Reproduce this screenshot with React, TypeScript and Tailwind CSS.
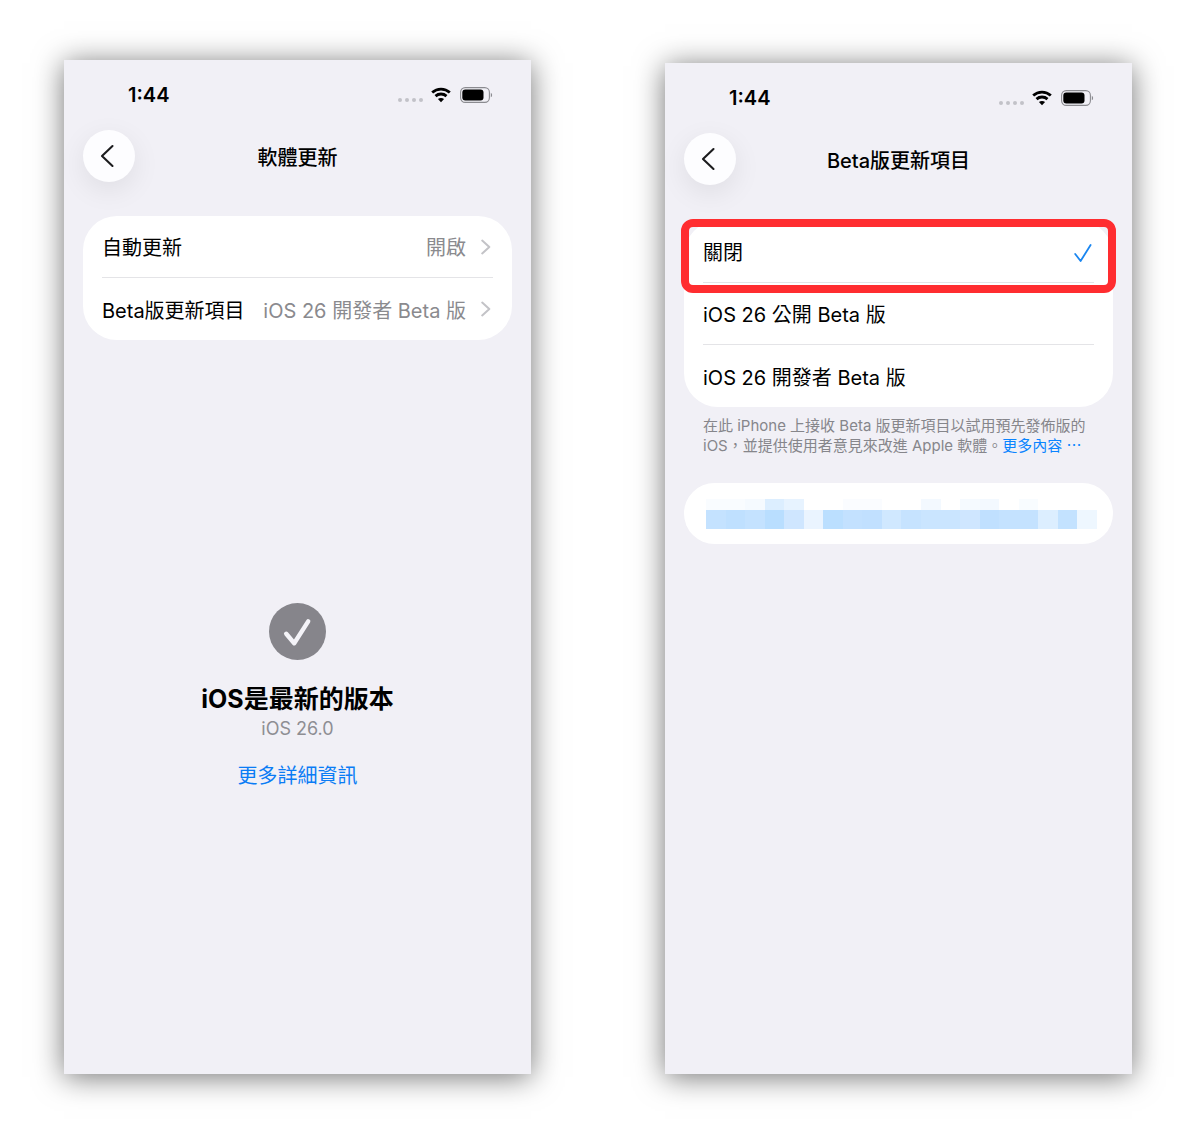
import React from 'react';

interface PhoneProps {
  title: string;
  className?: string;
  children: React.ReactNode;
}

// Placeholder blocks for the hidden account row
const MOSAIC_TOP = [
  'bg-[#f9fcff]', 'bg-[#f9fcff]', 'bg-[#f5faff]', 'bg-[#dceeff]', 'bg-[#e7f3ff]',
  'bg-white', 'bg-white', 'bg-[#fafcff]', 'bg-[#fafcff]', 'bg-white',
  'bg-white', 'bg-[#f3f9ff]', 'bg-white', 'bg-[#f5faff]', 'bg-[#f3f9ff]',
  'bg-white', 'bg-[#f8fcff]', 'bg-white', 'bg-white', 'bg-white',
];

const MOSAIC_BOTTOM = [
  'bg-[#c4e2ff]', 'bg-[#bfe0ff]', 'bg-[#c4e2ff]', 'bg-[#b9deff]', 'bg-[#cfe6ff]',
  'bg-[#eaf4ff]', 'bg-[#bbdfff]', 'bg-[#c3e1ff]', 'bg-[#c1e0ff]', 'bg-[#d0e8ff]',
  'bg-[#c6e3ff]', 'bg-[#cae5ff]', 'bg-[#cae5ff]', 'bg-[#cfe6ff]', 'bg-[#c0e0ff]',
  'bg-[#c4e2ff]', 'bg-[#c4e2ff]', 'bg-[#dceeff]', 'bg-[#c3e2ff]', 'bg-[#eef7ff]',
];

const WifiIcon = () => (
  <svg width="20" height="16" viewBox="0 0 20 16" aria-hidden="true">
    <g fill="none" stroke="#000" strokeWidth="2.8">
      <path d="M1.2 5.5C6.2 .9 13.8 .9 18.8 5.5" />
      <path d="M4.5 9.1C7.6 6.3 12.4 6.3 15.5 9.1" />
    </g>
    <path d="M10 15.2L6.9 12.1C8.6 10.5 11.4 10.5 13.1 12.1Z" fill="#000" />
  </svg>
);

const BatteryIcon = () => (
  <svg width="33" height="16" viewBox="0 0 33 16" aria-hidden="true">
    <rect x=".6" y=".6" width="28.8" height="14.8" rx="4.6" fill="none" stroke="#8b8b90" strokeWidth="1.1" />
    <rect x="2.3" y="2.4" width="21.2" height="11.2" rx="3" fill="#000" />
    <path d="M30.8 5.7C32.6 6.5 32.6 9.5 30.8 10.3Z" fill="#8b8b90" />
  </svg>
);

const ChevronIcon = () => (
  <svg width="10" height="16" viewBox="0 0 10 16" aria-hidden="true">
    <path d="M1.2 1.6L8.3 8L1.2 14.4" fill="none" stroke="#c3c3c7" strokeWidth="2" strokeLinecap="round" strokeLinejoin="round" />
  </svg>
);

const Phone: React.FC<PhoneProps> = ({ title, className, children }) => (
  <section className={`flex min-w-0 flex-1 flex-col bg-[#f1f0f6] px-[19px] shadow-[0_3px_28px_rgba(0,0,0,0.55)] ${className ?? ''}`}>
    {/* Status bar */}
    <div className="flex h-[70px] items-center justify-between pr-[19px] pl-[45px]">
      <span className="text-xl font-semibold">1:44</span>
      <div className="flex items-center">
        <div className="mt-[10px] mr-2 flex gap-[3px]">
          {[0, 1, 2, 3].map((i) => (
            <span key={i} className="size-1 rounded-full bg-[#c2c2c8]" />
          ))}
        </div>
        <WifiIcon />
        <span className="ml-[9px] flex">
          <BatteryIcon />
        </span>
      </div>
    </div>

    {/* Navigation bar */}
    <header className="grid grid-cols-[52px_1fr_52px] items-center">
      <button
        type="button"
        aria-label="返回"
        className="flex size-[52px] items-center justify-center rounded-full bg-[#fdfdff] shadow-[0_8px_28px_rgba(0,0,0,0.08)]"
      >
        <svg width="16" height="24" viewBox="0 0 16 24" className="mr-1" aria-hidden="true">
          <path d="M13.5 2L3 12L13.5 22" fill="none" stroke="#1c1c1e" strokeWidth="2.1" strokeLinecap="round" strokeLinejoin="round" />
        </svg>
      </button>
      <h1 className="pt-[3px] text-center text-xl font-medium">{title}</h1>
    </header>

    {children}
  </section>
);

const SettingRow = ({ label, value }: { label: string; value: string }) => (
  <button type="button" className="flex h-[62px] w-full items-center text-left">
    <span className="pt-[3px]">{label}</span>
    <span className="mr-[15px] ml-auto pt-[3px] text-[#8a8a8e]">{value}</span>
    <span className="mr-[2px]">
      <ChevronIcon />
    </span>
  </button>
);

const OptionRow = ({ label, selected }: { label: string; selected?: boolean }) => (
  <button type="button" aria-pressed={!!selected} className="flex h-[62px] w-full items-center justify-between pt-[3px] text-left">
    <span>{label}</span>
    {selected && (
      <svg width="20" height="20" viewBox="0 0 20 20" className="mr-px" aria-hidden="true">
        <path d="M2.2 11L7.6 18L17.6 2" fill="none" stroke="#1a86f0" strokeWidth="1.8" strokeLinecap="round" strokeLinejoin="round" />
      </svg>
    )}
  </button>
);

const SoftwareUpdate = () => (
  <Phone title="軟體更新">
    <div className="mt-[34px] divide-y divide-[#e4e4e7] rounded-[34px] bg-white px-[19px]">
      <SettingRow label="自動更新" value="開啟" />
      <SettingRow label="Beta版更新項目" value="iOS 26 開發者 Beta 版" />
    </div>

    <div className="flex flex-1 flex-col items-center justify-center pb-[22px]">
      <svg width="57" height="57" viewBox="0 0 57 57" aria-hidden="true">
        <circle cx="28.5" cy="28.5" r="28.5" fill="#86858b" />
        <path d="M17.2 30.8L25.2 40.2L39.2 18.4" fill="none" stroke="#f4f3f8" strokeWidth="4.4" strokeLinecap="round" strokeLinejoin="round" />
      </svg>
      <h2 className="mt-6 text-[25px] leading-[30px] font-bold">iOS是最新的版本</h2>
      <p className="mt-[3px] text-lg leading-6 text-[#8e8e93]">iOS 26.0</p>
      <a href="#details" className="mt-[21px] leading-7 text-[#0a7cf5]">更多詳細資訊</a>
    </div>
  </Phone>
);

const BetaUpdates = () => (
  <Phone title="Beta版更新項目" className="mt-[3px]">
    <div className="relative mt-9 rounded-[34px] bg-white px-[19px]">
      <div className="divide-y divide-[#e4e4e7]">
        <OptionRow label="關閉" selected />
        <OptionRow label="iOS 26 公開 Beta 版" />
        <OptionRow label="iOS 26 開發者 Beta 版" />
      </div>
      {/* Highlight around the first option */}
      <div className="pointer-events-none absolute -inset-x-[3px] -top-[2px] h-[74px] rounded-xl border-8 border-[#ff2d30]" />
    </div>

    <p className="mt-[9px] px-[19px] text-[15px] leading-5 text-[#86868b]">
      在此 iPhone 上接收 Beta 版更新項目以試用預先發佈版的
      <br />
      iOS，並提供使用者意見來改進 Apple 軟體。
      <a href="#more" className="text-[#0a84ff]">更多內容 ⋯</a>
    </p>

    <div className="mt-[27px] h-[61px] rounded-full bg-white pt-4 pr-4 pl-[22px]">
      <div className="grid grid-cols-20">
        {MOSAIC_TOP.map((color, i) => (
          <span key={i} className={`h-[11px] ${color}`} />
        ))}
        {MOSAIC_BOTTOM.map((color, i) => (
          <span key={i} className={`h-[19px] ${color}`} />
        ))}
      </div>
    </div>
  </Phone>
);

export default function App() {
  return (
    <main
      lang="zh-Hant"
      className="flex min-h-screen gap-[134px] bg-white pt-[60px] pr-[68px] pb-[60px] pl-16 font-['Inter','Noto_Sans_CJK_TC',sans-serif] text-xl text-black"
    >
      <SoftwareUpdate />
      <BetaUpdates />
    </main>
  );
}
